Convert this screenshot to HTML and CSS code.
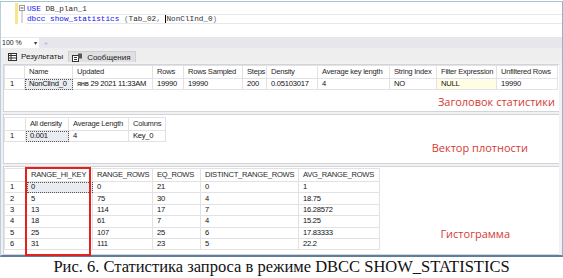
FILE: index.html
```html
<!DOCTYPE html>
<html>
<head>
<meta charset="utf-8">
<link rel="stylesheet" href="styles.css">
</head>
<body>
<div class="shot">
  <div class="editor">
    <div class="gutter"></div>
    <div class="changebar"></div>
    <div class="fold">
      <svg width="8" height="22" viewBox="0 0 8 22"><rect x="1.5" y="2.5" width="5" height="5" fill="#fff" stroke="#9a9a9a"/><line x1="2.5" y1="5" x2="5.5" y2="5" stroke="#555"/><line x1="4" y1="8" x2="4" y2="20" stroke="#b0b0b0"/></svg>
    </div>
    <div class="code">
      <div class="line"><span class="kw">USE</span> DB_plan_1</div>
      <div class="line cur"><span class="kw">dbcc show_statistics</span> <span class="pu">(</span>Tab_02<span class="pu">,</span> <span class="caret"></span>NonClInd_0<span class="pu">)</span></div>
    </div>
  </div>
  <div class="zoombar">
    <div class="zoomsel"><span>100 %</span><span class="arr">▾</span></div>
    <span class="scrl">◂</span>
  </div>
  <div class="tabstrip">
    <div class="tab">
      <svg width="9" height="8" viewBox="0 0 9 8"><rect x="0.5" y="0.5" width="8" height="7" fill="#fff" stroke="#333"/><line x1="0.5" y1="2.5" x2="8.5" y2="2.5" stroke="#333"/><line x1="0.5" y1="5" x2="8.5" y2="5" stroke="#333"/><line x1="3" y1="0.5" x2="3" y2="7.5" stroke="#333"/></svg>
      <span>Результаты</span>
    </div>
    <div class="tab msg">
      <svg width="11" height="9" viewBox="0 0 11 9"><rect x="0.5" y="2.5" width="6" height="6" fill="#fff" stroke="#333"/><line x1="2" y1="4.5" x2="5" y2="4.5" stroke="#333"/><line x1="2" y1="6.5" x2="5" y2="6.5" stroke="#333"/><rect x="6" y="0.5" width="4" height="5" fill="#555"/></svg>
      <span>Сообщения</span>
    </div>
  </div>
  <div class="results">
    <div class="pane p1">
      <table class="grid g1">
        <colgroup><col><col><col><col><col><col><col><col><col><col><col></colgroup>
        <tr class="hd"><td></td><td>Name</td><td>Updated</td><td>Rows</td><td>Rows Sampled</td><td>Steps</td><td>Density</td><td>Average key length</td><td>String Index</td><td>Filter Expression</td><td>Unfiltered Rows</td></tr>
        <tr><td class="rn">1</td><td class="sel">NonClInd_0</td><td>янв 29 2021 11:33AM</td><td>19990</td><td>19990</td><td>200</td><td>0.05103017</td><td>4</td><td>NO</td><td class="nul">NULL</td><td>19990</td></tr>
      </table>
      <div class="note n1">Заголовок статистики</div>
    </div>
    <div class="pane p2">
      <table class="grid g2">
        <colgroup><col><col><col><col></colgroup>
        <tr class="hd"><td></td><td>All density</td><td>Average Length</td><td>Columns</td></tr>
        <tr><td class="rn">1</td><td class="sel">0.001</td><td>4</td><td>Key_0</td></tr>
      </table>
      <div class="note n2">Вектор плотности</div>
    </div>
    <div class="pane p3">
      <table class="grid g3">
        <colgroup><col><col><col><col><col><col></colgroup>
        <tr class="hd"><td></td><td>RANGE_HI_KEY</td><td>RANGE_ROWS</td><td>EQ_ROWS</td><td>DISTINCT_RANGE_ROWS</td><td>AVG_RANGE_ROWS</td></tr>
        <tr><td class="rn">1</td><td class="sel">0</td><td>0</td><td>21</td><td>0</td><td>1</td></tr>
        <tr><td class="rn">2</td><td>5</td><td>75</td><td>30</td><td>4</td><td>18.75</td></tr>
        <tr><td class="rn">3</td><td>13</td><td>114</td><td>17</td><td>7</td><td>16.28572</td></tr>
        <tr><td class="rn">4</td><td>18</td><td>61</td><td>7</td><td>4</td><td>15.25</td></tr>
        <tr><td class="rn">5</td><td>25</td><td>107</td><td>25</td><td>6</td><td>17.83333</td></tr>
        <tr><td class="rn">6</td><td>31</td><td>111</td><td>23</td><td>5</td><td>22.2</td></tr>
      </table>
      <div class="note n3">Гистограмма</div>
      <div class="redbox"></div>
    </div>
  </div>
</div>
<div class="caption">Рис. 6. Статистика запроса в режиме DBCC SHOW_STATISTICS</div>
</body>
</html>
```

FILE: styles.css
```css
html, body {
  margin: 0;
  padding: 0;
}
body {
  width: 563px;
  height: 278px;
  overflow: hidden;
  background: #fff;
  font-family: "Liberation Sans", Arial, sans-serif;
  color: #000;
}
.shot {
  margin-top: 1px;
  height: 256px;
  box-sizing: border-box;
  border-top: 1px solid #a6c6cf;
  border-right: 1px solid #8fb3d9;
  border-left: 1px solid #b9cde3;
  border-bottom: 2px solid #5f7d9c;
  display: flex;
  flex-direction: column;
}
.editor {
  height: 35px;
  display: flex;
  background: #fff;
}
.gutter {
  width: 14px;
}
.changebar {
  width: 3px;
  height: 21px;
  margin-top: 1px;
  background: #f6e88a;
}
.fold {
  width: 8px;
  padding-top: 1px;
}
.fold svg {
  display: block;
}
.code {
  flex: 1;
  font-family: "Liberation Mono", "DejaVu Sans Mono", monospace;
  font-size: 7.7px;
  padding-top: 2px;
}
.line {
  height: 10px;
  line-height: 10px;
  white-space: pre;
  color: #303030;
  padding-left: 1px;
}
.line.cur {
  height: 8px;
  line-height: 8px;
  border-top: 1px solid #e8e8ec;
  border-bottom: 1px solid #e8e8ec;
}
.kw {
  color: #1010f0;
}
.pu {
  color: #707070;
}
.caret {
  display: inline-block;
  width: 0;
  height: 8px;
  border-left: 1px solid #000;
  vertical-align: top;
}
.zoombar {
  height: 11px;
  background: #e6e6ec;
  display: flex;
  align-items: center;
  gap: 5px;
}
.zoomsel {
  width: 38px;
  height: 10px;
  box-sizing: border-box;
  background: #fff;
  display: flex;
  align-items: center;
  justify-content: space-between;
  padding: 0 2px 0 1px;
  font-size: 7px;
  color: #222;
}
.zoomsel .arr {
  font-size: 6px;
  color: #333;
}
.scrl {
  font-size: 6px;
  color: #c0c0c6;
}
.tabstrip {
  height: 14px;
  background: #eeeeee;
  display: flex;
  align-items: flex-end;
  padding-left: 4px;
  gap: 2px;
}
.tab {
  height: 11px;
  display: flex;
  align-items: center;
  gap: 4px;
  padding: 0 3px;
  font-size: 8px;
  color: #222;
  box-sizing: border-box;
}
.tab.msg {
  background: #e0e0e2;
  border: 1px solid #cfcfd2;
  border-bottom: none;
  padding: 0 4px 0 3px;
}
.results {
  flex: 1;
  background: #f1f1f3;
  display: flex;
  flex-direction: column;
  gap: 2px;
  padding: 2px 3px 0 2px;
}
.pane {
  background: #fff;
  border: 1px solid #d4d4d8;
  border-right: none;
  position: relative;
}
.p1 {
  height: 46px;
  display: flex;
  flex-direction: column;
}
.p2 {
  display: flex;
  justify-content: space-between;
  padding-top: 2px;
  box-sizing: border-box;
  height: 50px;
}
.p3 {
  flex: 1;
  display: flex;
  justify-content: space-between;
}
.grid {
  border-collapse: collapse;
  table-layout: fixed;
  font-size: 7.6px;
  letter-spacing: -0.25px;
  align-self: flex-start;
}
.grid td {
  border: 1px solid #e2e2e4;
  height: 10px;
  line-height: 10px;
  padding: 0 0 0 4px;
  white-space: nowrap;
  overflow: hidden;
  color: #111;
}
.grid tr.hd td {
  height: 12px;
  line-height: 12px;
  color: #2a2a2a;
}
.grid td.rn {
  padding-left: 5px;
}
.grid td.sel {
  background: #e9ecf0;
  outline: 1px dotted #555;
  outline-offset: -1px;
}
.grid td.nul {
  background: #fffde3;
}
.g1 col:nth-child(1) { width: 20px; }
.g1 col:nth-child(2) { width: 48px; }
.g1 col:nth-child(3) { width: 80px; }
.g1 col:nth-child(4) { width: 31px; }
.g1 col:nth-child(5) { width: 59px; }
.g1 col:nth-child(6) { width: 24px; }
.g1 col:nth-child(7) { width: 51px; }
.g1 col:nth-child(8) { width: 72px; }
.g1 col:nth-child(9) { width: 47px; }
.g1 col:nth-child(10) { width: 60px; }
.g1 col:nth-child(11) { width: 61px; }
.g1 { width: 553px; }
.g2 col:nth-child(1) { width: 21px; }
.g2 col:nth-child(2) { width: 43px; }
.g2 col:nth-child(3) { width: 60px; }
.g2 col:nth-child(4) { width: 37px; }
.g2 { width: 161px; }
.g3 col:nth-child(1) { width: 22px; }
.g3 col:nth-child(2) { width: 66px; }
.g3 col:nth-child(3) { width: 60px; }
.g3 col:nth-child(4) { width: 48px; }
.g3 col:nth-child(5) { width: 98px; }
.g3 col:nth-child(6) { width: 81px; }
.g3 { width: 375px; }
.g3 tr td {
  height: 10.4px;
}
.g3 tr.hd td {
  height: 12px;
}
.p3 .grid {
  margin-top: 1px;
}
.note {
  font-family: "Open Sans", "Noto Sans", sans-serif;
  font-size: 11px;
  color: #d43a34;
  line-height: 14px;
  white-space: nowrap;
}
.n1 {
  align-self: flex-end;
  margin-top: 5px;
  margin-right: 4px;
}
.n2 {
  align-self: flex-end;
  margin-bottom: 8px;
  margin-right: 31px;
}
.n3 {
  align-self: flex-end;
  margin-bottom: 13px;
  margin-right: 49px;
}
.redbox {
  position: absolute;
  left: 21px;
  top: 0;
  width: 66px;
  height: 89px;
  box-sizing: border-box;
  border: 2px solid #e4221d;
  pointer-events: none;
}
.caption {
  font-family: "Liberation Serif", "Times New Roman", serif;
  font-size: 16.5px;
  text-align: center;
  line-height: 20px;
  height: 21px;
  color: #111;
}
```
